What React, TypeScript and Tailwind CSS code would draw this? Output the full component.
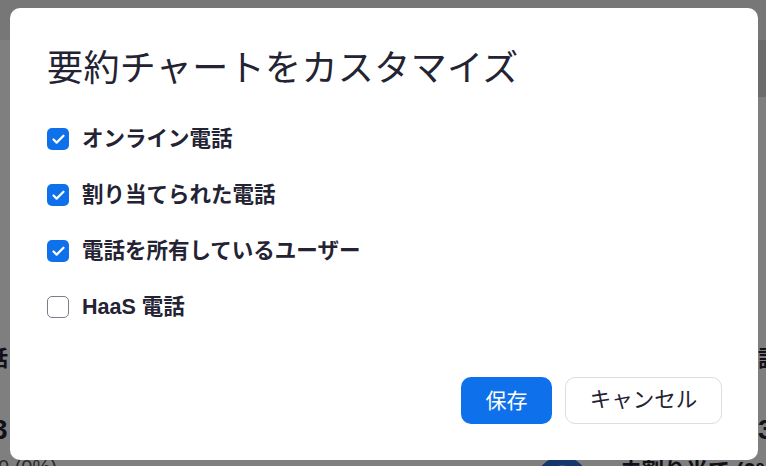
import { Check } from 'lucide-react';

const ITEMS = [
  { id: 'online', label: 'オンライン電話', checked: true },
  { id: 'assigned', label: '割り当てられた電話', checked: true },
  { id: 'owners', label: '電話を所有しているユーザー', checked: true },
  { id: 'haas', label: 'HaaS 電話', checked: false },
];

function Box({ checked }: { checked: boolean }) {
  if (checked) {
    return (
      <span className="flex h-[22px] w-[22px] shrink-0 items-center justify-center rounded-[5px] bg-[#0e71eb]">
        <Check className="h-[15px] w-[15px] text-white" strokeWidth={3.5} />
      </span>
    );
  }
  return <span className="h-[22px] w-[22px] shrink-0 rounded-[5px] border-[1.5px] border-[#7c7c8a] bg-white" />;
}

export default function App() {
  return (
    <div className="relative h-[466px] w-[766px] overflow-hidden bg-white font-['Liberation_Sans','Noto_Sans_CJK_JP',sans-serif] text-[#232333]">
      {/* page behind the dialog */}
      <div className="h-[40px] bg-[#eeeeee]" />
      <div className="flex h-[57px]">
        <div className="flex-1" />
        <div className="w-[180px] bg-[#d8d8d8]" />
      </div>
      <div className="flex pt-[248px]">
        <div className="-ml-[36px] flex w-[300px] shrink-0 flex-col">
          <div className="text-[22px] font-bold leading-[28px]">電話</div>
          <div className="mt-[42px] pl-[28px] text-[28px] font-bold leading-[30px]">3</div>
          <div className="mt-[10px] pl-[34px] text-[20px] leading-[24px] text-[#555]">0 (0%)</div>
        </div>
        <div className="ml-[271px] flex shrink-0 flex-col pt-[111px]">
          <svg width="54" height="54" viewBox="0 0 54 54">
            <circle cx="27" cy="27" r="22" fill="none" stroke="#2d6fd6" strokeWidth="9" />
          </svg>
        </div>
        <div className="ml-[31px] flex shrink-0 flex-col pt-[112px]">
          <div className="text-[22px] font-bold leading-[28px] whitespace-nowrap">未割り当て (0%)</div>
        </div>
      </div>
      <div className="absolute left-[758px] top-[345px] flex flex-col">
        <div className="text-[22px] font-bold leading-[28px] whitespace-nowrap">話電</div>
        <div className="mt-[42px] text-[28px] font-bold leading-[30px]">3</div>
      </div>

      {/* overlay */}
      <div className="absolute inset-0 bg-black/50" />

      {/* dialog */}
      <div className="absolute left-[10px] top-[8px] flex h-[452px] w-[748px] flex-col rounded-[10px] bg-white pb-[36px] pl-[37px] pr-[36px] pt-[43px]">
        <h1 className="h-[36px] text-[36px] font-normal leading-[36px] tracking-[0.4px] text-[#232333]">要約チャートをカスタマイズ</h1>
        <div className="mt-[24px] flex flex-col">
          {ITEMS.map((item) => (
            <label key={item.id} className="flex h-[56px] items-center gap-[13px]">
              <Box checked={item.checked} />
              <span className="text-[21.5px] font-bold leading-[28px] text-[#232333]">{item.label}</span>
            </label>
          ))}
        </div>
        <div className="mt-auto flex justify-end gap-[13px]">
          <button className="h-[47px] w-[91px] rounded-[10px] bg-[#0e71eb] text-[21px] text-white">保存</button>
          <button className="h-[47px] w-[157px] rounded-[10px] border border-[#dcdce2] bg-white text-[21.5px] text-[#232333]">キャンセル</button>
        </div>
      </div>
    </div>
  );
}
